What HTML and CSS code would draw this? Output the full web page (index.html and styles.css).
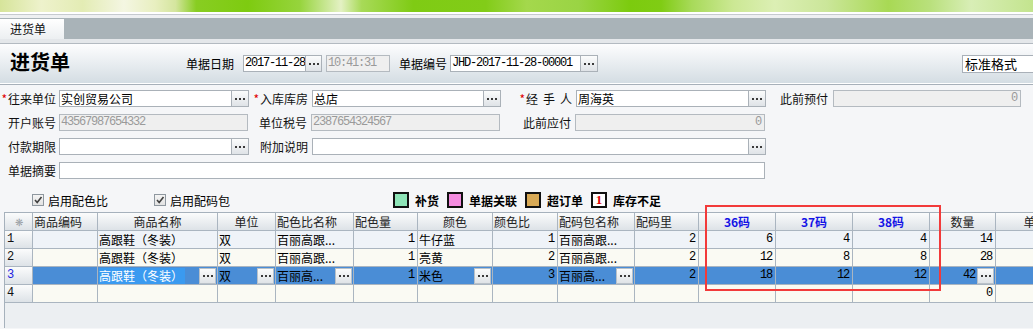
FILE: index.html
```html
<!DOCTYPE html>
<html lang="zh">
<head>
<meta charset="utf-8">
<title>进货单</title>
<link rel="stylesheet" href="styles.css">
</head>
<body>
<div class="banner"></div>
<div class="bsep"></div>
<div class="tabbar"><div class="tab">进货单</div></div>
<div class="tabgap"></div>
<div class="hdr">
  <div class="title">进货单</div>
  <div class="hlbl">单据日期</div>
  <div class="inp mono w63">2017-11-28</div><div class="btn w16"><svg width="10" height="2"><rect x="0" width="2" height="2"/><rect x="4" width="2" height="2"/><rect x="8" width="2" height="2"/></svg></div>
  <div class="inp dis mono w64 ml4">10:41:31</div>
  <div class="hlbl ml9 mr3">单据编号</div>
  <div class="inp mono w131">JHD-2017-11-28-00001</div><div class="btn"><svg width="10" height="2"><rect x="0" width="2" height="2"/><rect x="4" width="2" height="2"/><rect x="8" width="2" height="2"/></svg></div>
  <div class="sel">标准格式</div>
</div>
<div class="form">
  <div class="frow">
    <div class="lbl l1"><span class="req">*</span>往来单位</div>
    <div class="inp w173">实创贸易公司</div><div class="btn"><svg width="10" height="2"><rect x="0" width="2" height="2"/><rect x="4" width="2" height="2"/><rect x="8" width="2" height="2"/></svg></div>
    <div class="lbl l2"><span class="req">*</span>入库库房</div>
    <div class="inp w172">总店</div><div class="btn"><svg width="10" height="2"><rect x="0" width="2" height="2"/><rect x="4" width="2" height="2"/><rect x="8" width="2" height="2"/></svg></div>
    <div class="lbl l3"><span class="req">*</span><span class="spread"><span>经</span><span>手</span><span>人</span></span></div>
    <div class="inp w173">周海英</div><div class="btn"><svg width="10" height="2"><rect x="0" width="2" height="2"/><rect x="4" width="2" height="2"/><rect x="8" width="2" height="2"/></svg></div>
    <div class="lbl l4">此前预付</div>
    <div class="inp dis mono r w188">0</div>
  </div>
  <div class="frow">
    <div class="lbl l1">开户账号</div>
    <div class="inp dis mono w189">43567987654332</div>
    <div class="lbl l2">单位税号</div>
    <div class="inp dis mono w189">2387654324567</div>
    <div class="lbl l3">此前应付</div>
    <div class="inp dis mono r w190">0</div>
  </div>
  <div class="frow">
    <div class="lbl l1">付款期限</div>
    <div class="inp w173"></div><div class="btn"><svg width="10" height="2"><rect x="0" width="2" height="2"/><rect x="4" width="2" height="2"/><rect x="8" width="2" height="2"/></svg></div>
    <div class="lbl l2">附加说明</div>
    <div class="inp w437"></div><div class="btn"><svg width="10" height="2"><rect x="0" width="2" height="2"/><rect x="4" width="2" height="2"/><rect x="8" width="2" height="2"/></svg></div>
  </div>
  <div class="frow">
    <div class="lbl l1">单据摘要</div>
    <div class="inp w706"></div>
  </div>
</div>
<div class="lower">
  <div class="opts">
    <div class="chk"><span class="box"><svg width="10" height="10"><path d="M2 5 L4.2 7.5 L8.5 2" fill="none" stroke="#404040" stroke-width="1.6"/></svg></span>启用配色比</div>
    <div class="chk chk2"><span class="box"><svg width="10" height="10"><path d="M2 5 L4.2 7.5 L8.5 2" fill="none" stroke="#404040" stroke-width="1.6"/></svg></span>启用配码包</div>
    <div class="legend">
      <span class="sw sw-green"></span><b>补货</b>
      <span class="sw sw-pink"></span><b>单据关联</b>
      <span class="sw sw-tan"></span><b>超订单</b>
      <span class="sw sw-one">1</span><b>库存不足</b>
    </div>
  </div>
  <div class="gridwrap">
    <div class="grid">
      <div class="hc rh corner">❋</div>
      <div class="hc">商品编码</div>
      <div class="hc c">商品名称</div>
      <div class="hc c">单位</div>
      <div class="hc">配色比名称</div>
      <div class="hc">配色量</div>
      <div class="hc c">颜色</div>
      <div class="hc">颜色比</div>
      <div class="hc">配码包名称</div>
      <div class="hc">配码里</div>
      <div class="hc c size">36码</div>
      <div class="hc c size">37码</div>
      <div class="hc c size">38码</div>
      <div class="hc c">数量</div>
      <div class="hc c">单价</div>

      <div class="rh mono">1</div>
      <div class="d a"></div>
      <div class="d a">高跟鞋（冬装）</div>
      <div class="d a">双</div>
      <div class="d a">百丽高跟...</div>
      <div class="d a r mono">1</div>
      <div class="d a">牛仔蓝</div>
      <div class="d a r mono">1</div>
      <div class="d a">百丽高跟...</div>
      <div class="d a r mono">2</div>
      <div class="d a r mono">6</div>
      <div class="d a r mono">4</div>
      <div class="d a r mono">4</div>
      <div class="d a r mono">14</div>
      <div class="d a"></div>

      <div class="rh mono">2</div>
      <div class="d"></div>
      <div class="d">高跟鞋（冬装）</div>
      <div class="d">双</div>
      <div class="d">百丽高跟...</div>
      <div class="d r mono">1</div>
      <div class="d">亮黄</div>
      <div class="d r mono">2</div>
      <div class="d">百丽高跟...</div>
      <div class="d r mono">2</div>
      <div class="d r mono">12</div>
      <div class="d r mono">8</div>
      <div class="d r mono">8</div>
      <div class="d r mono">28</div>
      <div class="d"></div>

      <div class="rh mono cur">3</div>
      <div class="d s"></div>
      <div class="d s ed"><span class="hl">高跟鞋（冬装）</span><span class="cbtn"><svg width="10" height="2"><rect x="0" width="2" height="2"/><rect x="4" width="2" height="2"/><rect x="8" width="2" height="2"/></svg></span></div>
      <div class="d s ed"><span>双</span><span class="cbtn"><svg width="10" height="2"><rect x="0" width="2" height="2"/><rect x="4" width="2" height="2"/><rect x="8" width="2" height="2"/></svg></span></div>
      <div class="d s ed"><span>百丽高...</span><span class="cbtn"><svg width="10" height="2"><rect x="0" width="2" height="2"/><rect x="4" width="2" height="2"/><rect x="8" width="2" height="2"/></svg></span></div>
      <div class="d s r mono">1</div>
      <div class="d s ed"><span>米色</span><span class="cbtn"><svg width="10" height="2"><rect x="0" width="2" height="2"/><rect x="4" width="2" height="2"/><rect x="8" width="2" height="2"/></svg></span></div>
      <div class="d s r mono">3</div>
      <div class="d s ed"><span>百丽高...</span><span class="cbtn"><svg width="10" height="2"><rect x="0" width="2" height="2"/><rect x="4" width="2" height="2"/><rect x="8" width="2" height="2"/></svg></span></div>
      <div class="d s r mono">2</div>
      <div class="d s r mono">18</div>
      <div class="d s r mono">12</div>
      <div class="d s r mono">12</div>
      <div class="d s edr mono"><span>42</span><span class="cbtn"><svg width="10" height="2"><rect x="0" width="2" height="2"/><rect x="4" width="2" height="2"/><rect x="8" width="2" height="2"/></svg></span></div>
      <div class="d s"></div>

      <div class="rh mono">4</div>
      <div class="d"></div>
      <div class="d"></div>
      <div class="d"></div>
      <div class="d"></div>
      <div class="d"></div>
      <div class="d"></div>
      <div class="d"></div>
      <div class="d"></div>
      <div class="d"></div>
      <div class="d"></div>
      <div class="d"></div>
      <div class="d"></div>
      <div class="d r mono">0</div>
      <div class="d"></div>
    </div>
  </div>
  <div class="mark"></div>
</div>
</body>
</html>
```
FILE: styles.css
```css
html, body {
  margin: 0;
  padding: 0;
}
body {
  width: 1033px;
  height: 329px;
  overflow: hidden;
  background: #f5f6f8;
  font-family: "Noto Sans CJK SC", "Noto Sans", sans-serif;
  font-size: 12px;
  color: #000;
}
.mono {
  font-family: "Liberation Mono", "Noto Sans CJK SC", monospace;
  font-size: 12px;
  letter-spacing: -1.2px;
}
.banner {
  height: 12px;
  background: linear-gradient(90deg,
    #d6e49a 0%, #eef2cc 4%, #e3ecb4 8%, #f4f6e2 12%, #e8efc0 15%,
    #d4e59e 17%, #88cd22 19%, #7ecb10 24%, #96d43c 29%, #e4f1c4 33%,
    #a8da58 35%, #7fcb14 40%, #82cc18 47%, #a4d84c 51%, #9ad444 56%,
    #7ccb0e 61%, #80cc14 64%, #a8da5a 67%, #cce894 71%, #dcefb4 75%,
    #cbe69a 80%, #a8d954 86%, #b9e07c 90%, #d8eeb6 94%, #c3e48e 100%);
}
.bsep {
  height: 6px;
  background: linear-gradient(#ffffff 0 2px, #c6cacf 2px 3px, #eef0f2 3px 6px);
}
.tabbar {
  height: 21px;
  background: #a9b3b8;
  display: flex;
  align-items: flex-end;
}
.tab {
  width: 64px;
  height: 20px;
  box-sizing: border-box;
  padding-left: 10px;
  line-height: 20px;
  background: linear-gradient(#ffffff, #eceff1);
  color: #111;
}
.tabgap {
  height: 4px;
  background: #e4e7ea;
  border-bottom: 1px solid #b3bac1;
}
.hdr {
  height: 40px;
  box-sizing: border-box;
  padding-left: 10px;
  display: flex;
  align-items: center;
  background: linear-gradient(#fdfdfe, #d4dde3);
  border-bottom: 1px solid #ffffff;
  overflow: hidden;
}
.title {
  width: 176px;
  flex: none;
  font-size: 20px;
  font-weight: bold;
  margin-top: -4px;
  line-height: 24px;
}
.hlbl {
  width: 48px;
  flex: none;
  margin-right: 9px;
  white-space: nowrap;
}
.ml4 { margin-left: 4px; }
.ml9 { margin-left: 9px; }
.mr3 { margin-right: 3px; }
.sel {
  flex: none;
  margin-left: 364px;
  width: 90px;
  height: 18px;
  box-sizing: border-box;
  border: 1px solid #a9b0b8;
  background: #fff;
  line-height: 16px;
  padding-left: 2px;
  font-size: 13px;
}
.form {
  border-top: 1px solid #a7b0b9;
  padding-top: 5px;
  display: flex;
  flex-direction: column;
  gap: 7px;
}
.frow {
  display: flex;
  height: 17px;
  align-items: stretch;
}
.lbl {
  flex: none;
  box-sizing: border-box;
  display: flex;
  justify-content: flex-end;
  align-items: center;
  white-space: nowrap;
  color: #111;
}
.l1 { width: 59px; padding-right: 3px; }
.l2 { width: 63px; padding-right: 4px; }
.l3 { width: 75px; padding-right: 4px; }
.l4 { width: 67px; padding-right: 5px; }
.req {
  color: #e00000;
  margin-right: 1px;
}
.spread {
  display: inline-flex;
  justify-content: space-between;
  width: 46px;
}
.inp {
  flex: none;
  box-sizing: border-box;
  height: 17px;
  border: 1px solid #aab1b8;
  background: #fff;
  padding: 0 1px;
  line-height: 15px;
  white-space: nowrap;
  overflow: hidden;
}
.inp.dis {
  background: #efefef;
  border-color: #b4bac0;
  color: #9a9a9a;
}
.inp.r { text-align: right; padding-right: 3px; }
.w63 { width: 63px; }
.w64 { width: 64px; }
.w131 { width: 131px; }
.w172 { width: 172px; }
.w173 { width: 173px; }
.w188 { width: 188px; }
.w189 { width: 189px; }
.w190 { width: 190px; }
.w437 { width: 437px; }
.w706 { width: 706px; }
.btn {
  flex: none;
  box-sizing: border-box;
  width: 17px;
  height: 17px;
  border: 1px solid #aab1b8;
  border-left: none;
  background: linear-gradient(#fbfcfc, #dfe3e7);
  display: flex;
  align-items: center;
  justify-content: center;
  fill: #3a3a3a;
}
.btn.w16 { width: 16px; }
.lower {
  position: relative;
  padding-top: 13px;
}
.opts {
  height: 16px;
  display: flex;
  align-items: center;
}
.chk {
  display: flex;
  align-items: center;
  margin-left: 32px;
  white-space: nowrap;
}
.chk2 { margin-left: 46px; }
.box {
  width: 12px;
  height: 12px;
  box-sizing: border-box;
  border: 1px solid #8e979f;
  background: linear-gradient(#f4f4f4, #e2e2e2);
  display: flex;
  align-items: center;
  justify-content: center;
  margin-right: 4px;
}
.legend {
  display: flex;
  align-items: center;
  margin-left: 163px;
  white-space: nowrap;
}
.legend b {
  font-weight: bold;
  margin-left: 6px;
  margin-right: 8px;
}
.sw {
  width: 16px;
  height: 16px;
  box-sizing: border-box;
  border: 2px solid #111;
  display: inline-block;
}
.sw-green { background: #8ee4b7; }
.sw-pink { background: #f48ce0; }
.sw-tan { background: #d8a955; }
.sw-one {
  background: #fff;
  color: #e00000;
  font-family: "Liberation Serif", serif;
  font-weight: bold;
  font-size: 13px;
  line-height: 12px;
  text-align: center;
}
.gridwrap {
  margin-top: 4px;
  margin-left: 4px;
  height: 116px;
  border-left: 1px solid #a6b1bc;
  background: #eceff2;
  overflow: hidden;
}
.grid {
  display: grid;
  grid-template-columns: 28px 65px 120px 58px 78px 64px 75px 65px 77px 64px 77px 77px 77px 66px 80px;
  grid-auto-rows: 18px;
  border-top: 1px solid #a6b1bc;
  width: 1071px;
}
.grid > div {
  box-sizing: border-box;
  border-right: 1px solid #aab5c0;
  border-bottom: 1px solid #aab5c0;
  line-height: 17px;
  white-space: nowrap;
  overflow: hidden;
  padding: 0 1px;
}
.hc {
  background: linear-gradient(#fbfcfc, #dde2e7);
  color: #222;
  padding-left: 2px;
}
.hc.c { text-align: center; }
.hc.size {
  color: #1414e6;
  font-weight: bold;
}
.grid > .rh {
  background: linear-gradient(#fbfcfc, #dde2e7);
  color: #111;
  padding-left: 2px;
}
.grid > .corner {
  text-align: center;
  color: #9aa0a6;
  font-size: 10px;
}
.grid > .rh.cur { color: #1d1de0; }
.d { background: #fafaf3; }
.d.a { background: #eff3f8; }
.grid > .r { text-align: right; padding-right: 3px; }
.d.s { background: #4a8dd6; }
.grid > .ed {
  display: flex;
  align-items: center;
  justify-content: space-between;
  padding-right: 1px;
}
.grid > .edr {
  display: flex;
  align-items: center;
  justify-content: flex-end;
  padding-right: 1px;
}
.hl {
  background: #3a9af0;
  color: #fff;
  line-height: 16px;
  padding-right: 2px;
}
.cbtn {
  width: 17px;
  height: 16px;
  box-sizing: border-box;
  background: linear-gradient(#fbfcfc, #dfe3e7);
  border: 1px solid #b9c1c8;
  display: flex;
  align-items: center;
  justify-content: center;
  fill: #3a3a3a;
  flex: none;
  margin-left: 2px;
}
.mark {
  position: absolute;
  left: 705px;
  top: 26px;
  width: 236px;
  height: 86px;
  box-sizing: border-box;
  border: 2px solid #f23a3a;
  pointer-events: none;
}
```
